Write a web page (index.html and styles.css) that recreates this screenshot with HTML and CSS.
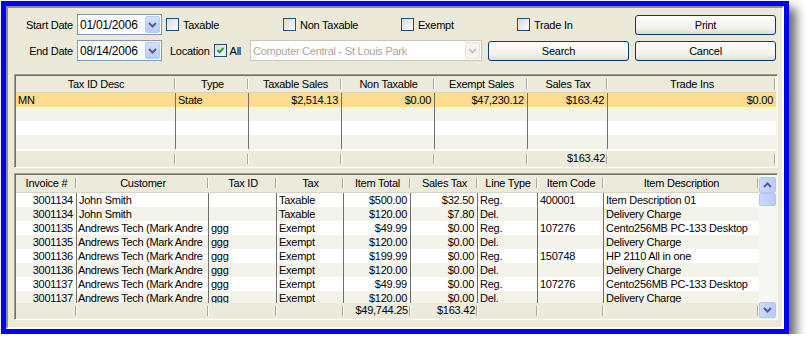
FILE: index.html
```html
<!DOCTYPE html>
<html>
<head>
    <title>Sales Tax Report</title>
    <link rel="stylesheet" href="styles.css">
</head>
<body>
<div class="window">
    <div class="client">
        <div class="filters">
            <div class="lbl">Start Date</div>
            <div class="combo">
                <span class="combo-text">01/01/2006</span>
                <span class="drop"><svg width="9" height="6" viewBox="0 0 9 6"><path d="M1 1l3.5 3.5L8 1" fill="none" stroke="#4d6185" stroke-width="2"/></svg></span>
            </div>
            <div class="cell pad4"><span class="chk"></span>Taxable</div>
            <div class="cell pad33">
                <span class="opt wide"><span class="chk"></span>Non Taxable</span>
                <span class="opt"><span class="chk"></span>Exempt</span>
            </div>
            <div class="cell pad29"><span class="chk"></span>Trade In</div>
            <button class="btn">Print</button>

            <div class="lbl">End Date</div>
            <div class="combo">
                <span class="combo-text">08/14/2006</span>
                <span class="drop"><svg width="9" height="6" viewBox="0 0 9 6"><path d="M1 1l3.5 3.5L8 1" fill="none" stroke="#4d6185" stroke-width="2"/></svg></span>
            </div>
            <div class="cell pad8">
                <span class="loc">Location</span>
                <span class="chk checked"><svg width="9" height="9" viewBox="0 0 9 9"><path d="M1.5 4l2 2.2L7.5 2" fill="none" stroke="#21a121" stroke-width="2"/></svg></span>All
            </div>
            <div class="combo disabled">
                <span class="combo-text">Computer Central - St Louis Park</span>
                <span class="drop"><svg width="9" height="6" viewBox="0 0 9 6"><path d="M1 1l3.5 3.5L8 1" fill="none" stroke="#c9c7ba" stroke-width="2"/></svg></span>
            </div>
            <div class="cell"><button class="btn">Search</button></div>
            <button class="btn">Cancel</button>
        </div>

        <div class="grid summary">
            <div class="row head sum-cols">
                <div class="hc">Tax ID Desc</div>
                <div class="hc">Type</div>
                <div class="hc">Taxable Sales</div>
                <div class="hc">Non Taxable</div>
                <div class="hc">Exempt Sales</div>
                <div class="hc">Sales Tax</div>
                <div class="hc">Trade Ins</div>
            </div>
            <div class="body sum-body">
                <div class="row data sum-cols selected">
                    <div class="c">MN</div>
                    <div class="c">State</div>
                    <div class="c r">$2,514.13</div>
                    <div class="c r">$0.00</div>
                    <div class="c r">$47,230.12</div>
                    <div class="c r">$163.42</div>
                    <div class="c r">$0.00</div>
                </div>
                <div class="row data sum-cols">
                    <div class="c"></div><div class="c"></div><div class="c"></div><div class="c"></div><div class="c"></div><div class="c"></div><div class="c"></div>
                </div>
                <div class="row data sum-cols">
                    <div class="c"></div><div class="c"></div><div class="c"></div><div class="c"></div><div class="c"></div><div class="c"></div><div class="c"></div>
                </div>
                <div class="row data sum-cols">
                    <div class="c"></div><div class="c"></div><div class="c"></div><div class="c"></div><div class="c"></div><div class="c"></div><div class="c"></div>
                </div>
            </div>
            <div class="row foot sum-cols">
                <div class="fc"></div><div class="fc"></div><div class="fc"></div><div class="fc"></div><div class="fc"></div>
                <div class="fc r">$163.42</div>
                <div class="fc"></div>
            </div>
        </div>

        <div class="grid invoices">
            <div class="inv-main">
                <div class="row head inv-head inv-cols">
                    <div class="hc">Invoice #</div>
                    <div class="hc">Customer</div>
                    <div class="hc">Tax ID</div>
                    <div class="hc">Tax</div>
                    <div class="hc">Item Total</div>
                    <div class="hc">Sales Tax</div>
                    <div class="hc">Line Type</div>
                    <div class="hc">Item Code</div>
                    <div class="hc">Item Description</div>
                </div>
                <div class="body inv-body">
                    <div class="row data inv-cols">
                        <div class="c r">3001134</div><div class="c">John Smith</div><div class="c"></div><div class="c">Taxable</div>
                        <div class="c r">$500.00</div><div class="c r">$32.50</div><div class="c">Reg.</div><div class="c">400001</div><div class="c">Item Description 01</div>
                    </div>
                    <div class="row data inv-cols">
                        <div class="c r">3001134</div><div class="c">John Smith</div><div class="c"></div><div class="c">Taxable</div>
                        <div class="c r">$120.00</div><div class="c r">$7.80</div><div class="c">Del.</div><div class="c"></div><div class="c">Delivery Charge</div>
                    </div>
                    <div class="row data inv-cols">
                        <div class="c r">3001135</div><div class="c cust">Andrews Tech (Mark Andre</div><div class="c">ggg</div><div class="c">Exempt</div>
                        <div class="c r">$49.99</div><div class="c r">$0.00</div><div class="c">Reg.</div><div class="c">107276</div><div class="c">Cento256MB PC-133 Desktop</div>
                    </div>
                    <div class="row data inv-cols">
                        <div class="c r">3001135</div><div class="c cust">Andrews Tech (Mark Andre</div><div class="c">ggg</div><div class="c">Exempt</div>
                        <div class="c r">$120.00</div><div class="c r">$0.00</div><div class="c">Del.</div><div class="c"></div><div class="c">Delivery Charge</div>
                    </div>
                    <div class="row data inv-cols">
                        <div class="c r">3001136</div><div class="c cust">Andrews Tech (Mark Andre</div><div class="c">ggg</div><div class="c">Exempt</div>
                        <div class="c r">$199.99</div><div class="c r">$0.00</div><div class="c">Reg.</div><div class="c">150748</div><div class="c">HP 2110 All in one</div>
                    </div>
                    <div class="row data inv-cols">
                        <div class="c r">3001136</div><div class="c cust">Andrews Tech (Mark Andre</div><div class="c">ggg</div><div class="c">Exempt</div>
                        <div class="c r">$120.00</div><div class="c r">$0.00</div><div class="c">Del.</div><div class="c"></div><div class="c">Delivery Charge</div>
                    </div>
                    <div class="row data inv-cols">
                        <div class="c r">3001137</div><div class="c cust">Andrews Tech (Mark Andre</div><div class="c">ggg</div><div class="c">Exempt</div>
                        <div class="c r">$49.99</div><div class="c r">$0.00</div><div class="c">Reg.</div><div class="c">107276</div><div class="c">Cento256MB PC-133 Desktop</div>
                    </div>
                    <div class="row data inv-cols">
                        <div class="c r">3001137</div><div class="c cust">Andrews Tech (Mark Andre</div><div class="c">ggg</div><div class="c">Exempt</div>
                        <div class="c r">$120.00</div><div class="c r">$0.00</div><div class="c">Del.</div><div class="c"></div><div class="c">Delivery Charge</div>
                    </div>
                </div>
                <div class="row foot inv-cols">
                    <div class="fc"></div><div class="fc"></div><div class="fc"></div><div class="fc"></div>
                    <div class="fc r">$49,744.25</div>
                    <div class="fc r">$163.42</div>
                    <div class="fc"></div><div class="fc"></div><div class="fc"></div>
                </div>
            </div>
            <div class="vscroll">
                <div class="sb-btn"><svg width="9" height="6" viewBox="0 0 9 6"><path d="M1 5l3.5-3.5L8 5" fill="none" stroke="#4d6185" stroke-width="2"/></svg></div>
                <div class="sb-thumb"></div>
                <div class="sb-track"></div>
                <div class="sb-btn"><svg width="9" height="6" viewBox="0 0 9 6"><path d="M1 1l3.5 3.5L8 1" fill="none" stroke="#4d6185" stroke-width="2"/></svg></div>
            </div>
        </div>
    </div>
</div>
</body>
</html>
```

FILE: styles.css
```css
* {
    box-sizing: border-box;
}
body {
    margin: 0;
    background: #fff;
    font-family: "Liberation Sans", Arial, sans-serif;
    font-size: 11px;
    letter-spacing: -0.25px;
    color: #000;
}
.window {
    width: 788px;
    height: 333px;
    margin: 1px 0 0 1px;
    border: 5px solid #0000f5;
    box-shadow: 7px 7px 10px rgba(0, 0, 0, 0.6);
}
.client {
    height: 100%;
    border: 2px solid;
    border-color: #8c8c8c #fff #fff #8c8c8c;
    background: #ece9d8;
    padding: 6px 4px 0 6px;
}

/* filter bar */
.filters {
    display: grid;
    grid-template-columns: 63px 85px 88px 238px 147px 141px;
    grid-template-rows: 21px 21px;
    row-gap: 5px;
    align-items: center;
}
.lbl {
    text-align: right;
    padding-right: 4px;
}
.cell {
    display: flex;
    align-items: center;
    height: 100%;
}
.pad4 { padding-left: 4px; }
.pad8 { padding-left: 8px; }
.pad29 { padding-left: 29px; }
.pad33 { padding-left: 33px; }
.opt {
    display: flex;
    align-items: center;
}
.opt.wide {
    width: 118px;
}
.loc {
    margin-right: 4px;
}
.chk {
    width: 13px;
    height: 13px;
    border: 1px solid #1c5180;
    background: linear-gradient(135deg, #dcdcd5, #fbfbfa);
    margin-right: 4px;
    display: flex;
    align-items: center;
    justify-content: center;
}
.chk.checked {
    margin-right: 3px;
}
.combo {
    height: 21px;
    border: 1px solid #7f9db9;
    background: #fff;
    display: flex;
    align-items: center;
    padding: 1px 1px 1px 2px;
}
.combo-text {
    flex: 1;
    white-space: nowrap;
    overflow: hidden;
    font-size: 12px;
}
.drop {
    width: 15px;
    height: 17px;
    border: 1px solid #b9c9ef;
    border-radius: 2px;
    background: linear-gradient(#d4e0fc, #b8cbf8);
    display: flex;
    align-items: center;
    justify-content: center;
}
.combo.disabled {
    width: 232px;
    border-color: #c9c7ba;
    color: #aca899;
}
.combo.disabled .combo-text {
    font-size: 11px;
}
.combo.disabled .drop {
    border-color: #e5e4dc;
    background: #f4f3ee;
}
.btn {
    width: 141px;
    height: 20px;
    align-self: end;
    border: 1px solid #003c74;
    border-radius: 3px;
    background: linear-gradient(#fefefe, #f2f1ec 70%, #dedbd0);
    font-family: inherit;
    font-size: 11px;
    letter-spacing: -0.25px;
    color: #000;
    padding: 0;
}
.cell .btn {
    align-self: flex-end;
}

/* data grids */
.grid {
    width: 764px;
    border: 1px solid;
    border-color: #a19f94 #fff #fff #a19f94;
    padding: 1px;
    box-shadow: inset 1px 1px 0 #716f64, inset -1px -1px 0 #f1efe2;
    background: #ece9d8;
}
.summary {
    margin-top: 13px;
    height: 94px;
}
.invoices {
    margin-top: 5px;
    height: 147px;
    display: flex;
}
.row {
    display: grid;
}
.sum-cols {
    grid-template-columns: 160px 73px 93px 93px 93px 80px 168px;
}
.inv-cols {
    grid-template-columns: 61px 132px 68px 67px 67px 67px 60px 66px 155px;
}
.head {
    height: 17px;
    line-height: 16px;
    background: #ebeadb;
    border-bottom: 1px solid #d8d4c4;
}
.inv-head {
    height: 18px;
    line-height: 17px;
}
.hc, .fc {
    text-align: center;
    white-space: nowrap;
    overflow: hidden;
    background:
        linear-gradient(#aca899, #aca899) no-repeat right 1px top 3px / 1px 10px,
        linear-gradient(#fff, #fff) no-repeat right 0 top 3px / 1px 10px;
}
.body {
    background: #fff;
    overflow: hidden;
}
.sum-body {
    height: 58px;
}
.inv-body {
    height: 110px;
}
.data {
    height: 14px;
    line-height: 14px;
}
.data:nth-child(even) {
    background: #f4f3e9;
}
.data.selected {
    background: #fddc8f;
}
.c {
    border-right: 1px solid #6f6f6f;
    padding: 0 3px 0 2px;
    white-space: nowrap;
    overflow: hidden;
}
.c.cust {
    padding: 0 0 0 1px;
    letter-spacing: -0.3px;
}
.c:last-child {
    border-right: 0;
}
.r {
    text-align: right;
}
.fc.r {
    text-align: right;
    padding-right: 3px;
}
.foot {
    height: 14px;
    line-height: 14px;
    background: #ebeadb;
}
.inv-main {
    flex: 1;
}
.vscroll {
    width: 17px;
    display: flex;
    flex-direction: column;
    background: #f7f7f3;
    padding-top: 2px;
}
.sb-btn, .sb-thumb {
    height: 16px;
    border: 1px solid #b4c6f0;
    border-radius: 2px;
    background: linear-gradient(90deg, #cbd9fc, #b7cbf8);
    display: flex;
    align-items: center;
    justify-content: center;
}
.sb-thumb {
    height: 13px;
}
.sb-track {
    flex: 1;
}
```
